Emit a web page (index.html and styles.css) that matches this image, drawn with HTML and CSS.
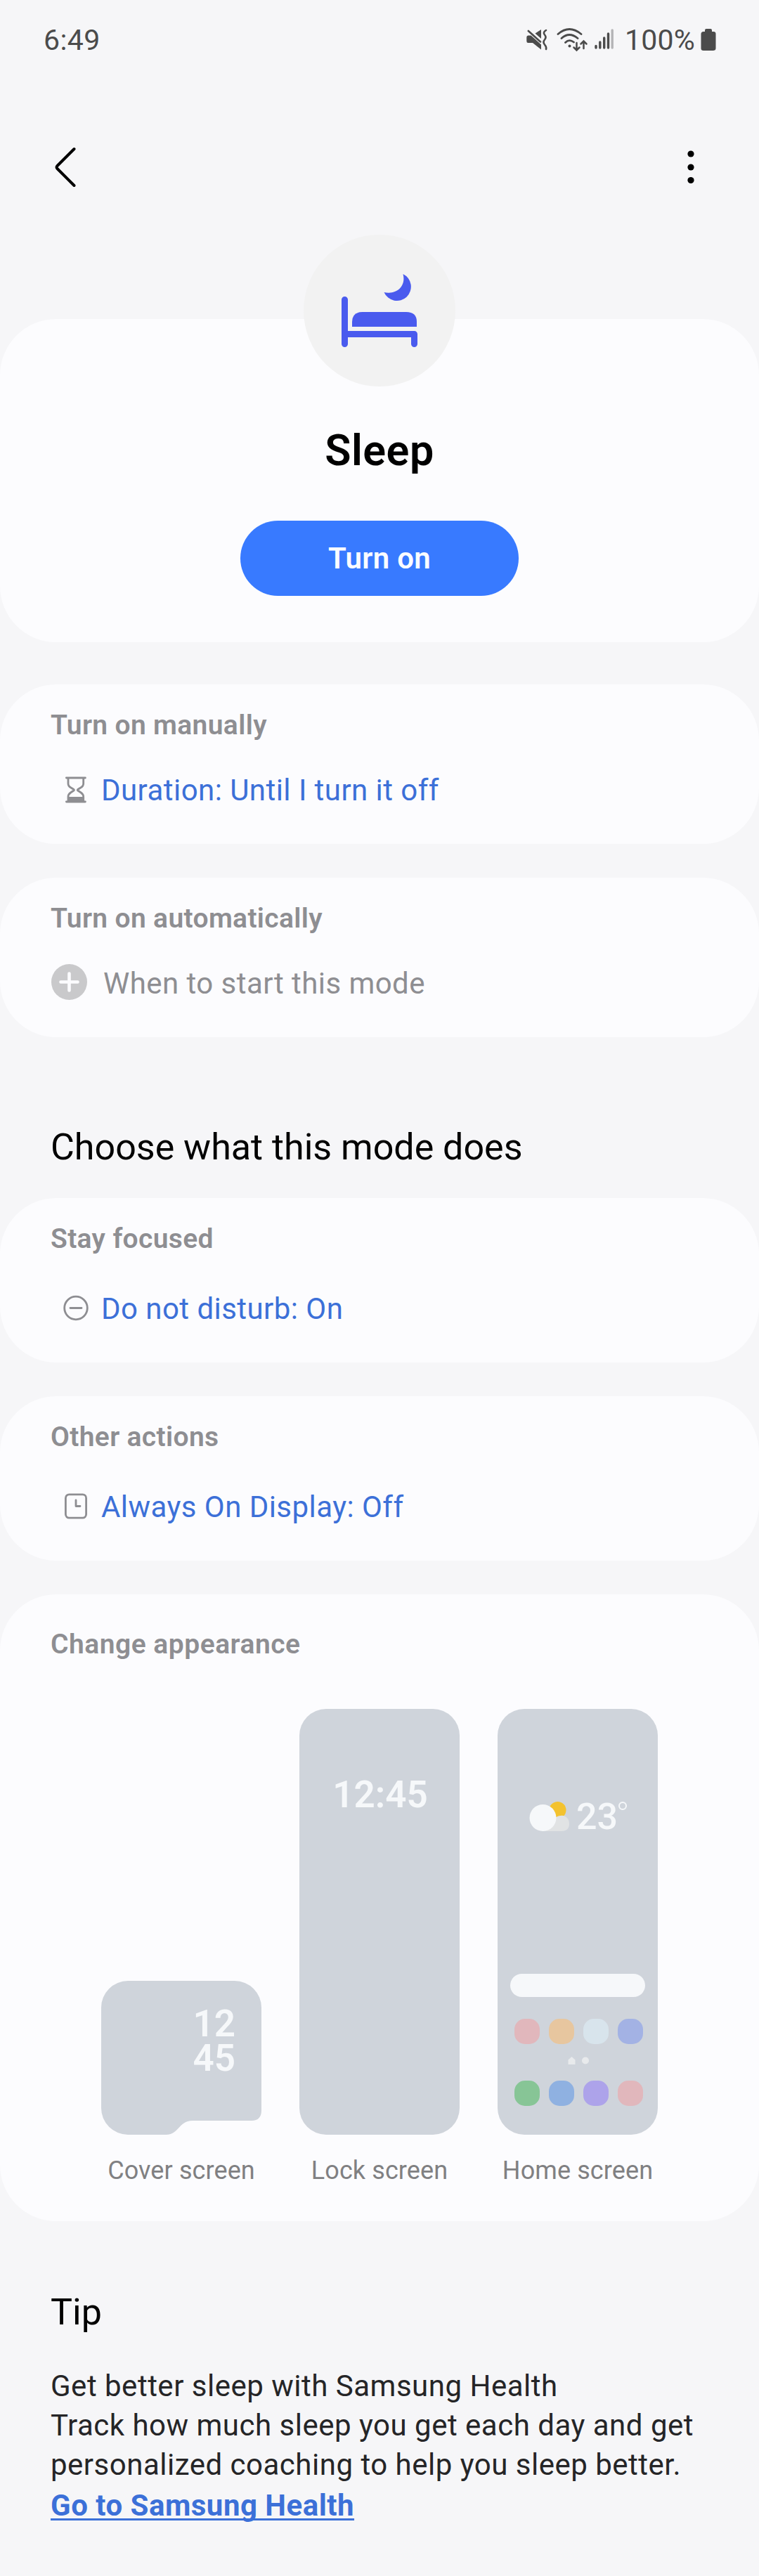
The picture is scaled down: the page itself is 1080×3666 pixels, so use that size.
FILE: index.html
```html
<!DOCTYPE html>
<html lang="en">
<head>
<meta charset="utf-8">
<title>Sleep mode</title>
<link rel="stylesheet" href="styles.css">
</head>
<body>
<header class="status">
  <span class="status-time">6:49</span>
  <svg class="status-mute" width="32" height="32" viewBox="0 0 32 32">
    <g fill="#4b4b4b">
      <path d="M2.500 9.500H6.500L21 22.500V29.500L9 20H2.500Q.3 20 .3 17.500V12Q.3 9.500 2.500 9.500Z"/>
      <path d="M12.500 6.500L21 1V14Z"/>
    </g>
    <path d="M2.800 3L20 18.500" stroke="#4b4b4b" stroke-width="2.600" stroke-linecap="round"/>
    <path d="M28 2Q23 5 26 8.500T26 15.500T26 22.500T28 29" stroke="#4b4b4b" stroke-width="2.600" stroke-linecap="round" fill="none"/>
  </svg>
  <svg class="status-wifi" width="45" height="36" viewBox="0 0 45 36" fill="none" stroke="#4b4b4b" stroke-width="2.800" stroke-linecap="round">
    <path d="M2 9.500Q18 -4.500 35 9.500M7 15.500Q18 5.500 30 15.500M12.500 21.500Q18 16 24.500 21"/>
    <circle cx="18.500" cy="26.500" r="2" fill="#4b4b4b" stroke="none"/>
    <path d="M28.500 22V32M24.500 28.500L28.500 32.500L32.500 28.500M38.500 30V20M34.500 23.500L38.500 19.500L42.500 23.500" stroke-width="2.500"/>
  </svg>
  <svg class="status-signal" width="28" height="30" viewBox="0 0 28 30" stroke="#4b4b4b" stroke-width="3.400" stroke-linecap="round">
    <path d="M2 24.500V27M7.800 19V27M13.700 13V27M19.500 7V27"/>
    <path d="M25.200 2V27" stroke="#b4b4b6"/>
  </svg>
  <span class="status-pct">100%</span>
  <svg width="22" height="32" viewBox="0 0 22 32" fill="#4b4b4b"><path d="M6 4V2Q6 0 8 0H14Q16 0 16 2V4H18Q21.500 4 21.500 7.500V28Q21.500 31 18 31H4Q.5 31 .5 28V7.500Q.5 4 4 4Z"/></svg>
</header>

<nav class="toolbar">
  <svg width="32" height="58" viewBox="0 0 32 58" fill="none" stroke="#000" stroke-width="4" stroke-linecap="round" stroke-linejoin="round"><path d="M28.500 3L4.500 27Q2.500 29 4.500 31L28.500 55"/></svg>
  <svg width="10" height="50" viewBox="0 0 10 50"><circle cx="5" cy="6" r="4.600"/><circle cx="5" cy="25" r="4.600"/><circle cx="5" cy="43.500" r="4.600"/></svg>
</nav>

<main>
  <section class="card hero">
    <div class="hero-icon">
      <svg width="108" height="105" viewBox="0 0 108 105" fill="#4a5bee">
        <path d="M87.500 0A20 20 0 1 1 60.500 26C79 30 92 17 87.500 0Z"/>
        <path d="M15 75V68Q15 54 30 54H92Q107 54 107 68V75Z"/>
        <path d="M4.500 36.500V99.500M4.500 85.500H103.500V99.500" fill="none" stroke="#4a5bee" stroke-width="9" stroke-linecap="round" stroke-linejoin="round"/>
      </svg>
    </div>
    <h1 class="hero-title">Sleep</h1>
    <button class="hero-button">Turn on</button>
  </section>

  <section class="card manual">
    <h2 class="label">Turn on manually</h2>
    <div class="row">
      <svg class="row-icon" width="34" height="38" viewBox="0 0 34 38" fill="none" stroke="#8e8e92" stroke-width="2.800" stroke-linecap="round">
        <path d="M3.400 2H30.400M3.400 36H30.400" />
        <path d="M6 3V10Q6 14 10 16L14 18.500Q15 19.300 14 20L9.500 23Q6 25.500 6 29V35M27.700 3V10Q27.700 14 23.700 16L19.700 18.500Q18.700 19.300 19.700 20L24.200 23Q27.700 25.500 27.700 29V35"/>
        <path d="M6 29H27.700V36H6Z" fill="#8e8e92" stroke="none"/>
      </svg>
      <span class="link">Duration: Until I turn it off</span>
    </div>
  </section>

  <section class="card">
    <h2 class="label">Turn on automatically</h2>
    <div class="row row-add">
      <svg class="add-icon" width="51" height="51" viewBox="0 0 51 51"><circle cx="25.500" cy="25.500" r="25.500" fill="#c9c9cb"/><path d="M25.500 13.500V37.500M13.500 25.500H37.500" stroke="#fcfcfe" stroke-width="4.600" stroke-linecap="round"/></svg>
      <span class="muted">When to start this mode</span>
    </div>
  </section>

  <h2 class="heading">Choose what this mode does</h2>

  <section class="card focus">
    <h2 class="label">Stay focused</h2>
    <div class="row">
      <svg class="row-icon" width="36" height="38" viewBox="0 0 36 38" fill="none" stroke="#8e8e92" stroke-width="2.800" stroke-linecap="round"><circle cx="18" cy="18.500" r="16.300"/><path d="M10 18.500H26"/></svg>
      <span class="link">Do not disturb: On</span>
    </div>
  </section>

  <section class="card actions">
    <h2 class="label">Other actions</h2>
    <div class="row">
      <svg class="row-icon" width="36" height="38" viewBox="0 0 36 38" fill="none" stroke="#8e8e92" stroke-width="2.800" stroke-linecap="round"><rect x="3.400" y="1.900" width="29.200" height="33.200" rx="5"/><path d="M18 10V18.500H24" stroke-linejoin="round"/></svg>
      <span class="link">Always On Display: Off</span>
    </div>
  </section>

  <section class="card appearance">
    <h2 class="label">Change appearance</h2>
    <div class="previews">
      <figure class="preview">
        <div class="cover">
          <svg class="cover-shape" width="228" height="219" viewBox="0 0 228 219"><path d="M38 0H190A38 38 0 0 1 228 38V184Q228 199 214 199H130C110 199 111 219 92 219H38A38 38 0 0 1 0 181V38A38 38 0 0 1 38 0Z" fill="#cfd4db"/></svg>
          <div class="cover-clock"><span>12</span><span>45</span></div>
        </div>
        <figcaption>Cover screen</figcaption>
      </figure>
      <figure class="preview">
        <div class="phone"><span class="lock-clock">12:45</span></div>
        <figcaption>Lock screen</figcaption>
      </figure>
      <figure class="preview">
        <div class="phone home">
          <div class="weather">
            <svg width="58" height="44" viewBox="0 0 58 44">
              <circle cx="40.500" cy="13" r="12" fill="#f3c22f"/>
              <path d="M20 43V30L38 23Q44 20 49 21Q57 24 57 32Q57 43 46 43Z" fill="#e1e3e4"/>
              <circle cx="19.500" cy="24" r="19" fill="#f6f8fa"/>
            </svg>
            <span class="temp">23</span>
            <span class="degree"></span>
          </div>
          <div class="search"></div>
          <div class="apps"><i class="red"></i><i class="orange"></i><i class="ice"></i><i class="indigo"></i></div>
          <svg class="pager" width="30" height="12" viewBox="0 0 30 12" fill="#e8eaec"><path d="M5.500 0L10.500 4.500V11H.5V4.500Z"/><circle cx="25" cy="5.500" r="5"/></svg>
          <div class="apps"><i class="green"></i><i class="blue"></i><i class="violet"></i><i class="red"></i></div>
        </div>
        <figcaption>Home screen</figcaption>
      </figure>
    </div>
  </section>

  <section class="tip">
    <h2 class="tip-title">Tip</h2>
    <p class="tip-text">Get better sleep with Samsung Health<br>Track how much sleep you get each day and get<br>personalized coaching to help you sleep better.</p>
    <a class="tip-link" href="#">Go to Samsung Health</a>
  </section>
</main>
</body>
</html>
```
FILE: styles.css
```css
* { box-sizing: border-box; }

body {
  margin: 0;
  width: 1080px;
  min-height: 3666px;
  background: #f6f6f8;
  color: #000;
  font-family: Roboto, "Liberation Sans", sans-serif;
}

svg { display: block; flex: none; }
h1, h2, p, figure { margin: 0; }

.status {
  display: flex;
  align-items: flex-start;
  height: 120px;
  padding: 41px 61px 0 62px;
  color: #4b4b4b;
  font-size: 41px;
}
.status-time { margin: -8px auto 0 0; line-height: 48px; letter-spacing: .4px; }
.status-mute { margin-right: 11px; }
.status-wifi { margin: -2px 9px 0 0; }
.status-signal { margin-right: 15px; }
.status-pct { width: 108px; margin-top: -8px; line-height: 48px; letter-spacing: .2px; }

.toolbar {
  display: flex;
  justify-content: space-between;
  align-items: center;
  height: 236px;
  padding: 0 92px 0 77px;
}

main { display: flex; flex-direction: column; gap: 48px; margin-top: 98px; }

.card {
  height: 227px;
  padding: 35px 72px 0;
  border-radius: 80px;
  background: #fcfcfe;
}

.hero {
  display: flex;
  flex-direction: column;
  align-items: center;
  height: 460px;
  padding: 0;
}
.hero-icon {
  display: flex;
  justify-content: center;
  width: 216px;
  height: 216px;
  margin-top: -120px;
  padding-top: 56px;
  border-radius: 50%;
  background: #f2f2f2;
}
.hero-title { margin-top: 56px; font-size: 61px; font-weight: 600; line-height: 70px; letter-spacing: .5px; }
.hero-button {
  width: 396px;
  height: 107px;
  margin-top: 65px;
  border: 0;
  border-radius: 54px;
  background: #387aff;
  color: #fafcff;
  font: 600 42px/50px Roboto, sans-serif;
  letter-spacing: .3px;
}

.manual { margin-top: 12px; }
.label { color: #8e8e92; font-size: 39px; font-weight: 600; line-height: 46px; letter-spacing: .35px; }
.row { display: flex; gap: 18px; height: 50px; margin-top: 45px; padding-left: 18px; font-size: 42px; line-height: 50px; letter-spacing: .45px; }
.row-icon { width: 36px; margin-top: 5px; }
.row-add { gap: 23px; padding-left: 1px; }
.add-icon { margin-top: -3px; }
.link { color: #3c70d8; }
.muted { color: #8e8e92; }

.heading { margin: 79px 72px -6px; font-size: 52px; font-weight: 400; line-height: 60px; }

.focus, .actions { height: 234px; }
.focus .row, .actions .row { margin-top: 52px; }

.appearance { height: 892px; padding-top: 48px; }
.appearance .label { letter-spacing: .5px; }
.previews { display: flex; align-items: flex-end; gap: 54px; margin: 69px 72px 0; }
.preview { width: 228px; }
.preview figcaption { margin-top: 30px; color: #808082; font-size: 36px; line-height: 42px; letter-spacing: .1px; text-align: center; white-space: nowrap; }

.cover { display: grid; height: 219px; }
.cover-shape, .cover-clock { grid-area: 1 / 1; }
.cover-clock {
  display: flex;
  flex-direction: column;
  align-items: flex-end;
  padding: 37px 37px 0 0;
  color: #f6f8fa;
  font-size: 53px;
  font-weight: 600;
  line-height: 49px;
}

.phone { height: 606px; border-radius: 38px; background: #cfd4db; color: #f6f8fa; }
.lock-clock { display: block; padding: 92px 0 0 2px; font-size: 53px; font-weight: 600; line-height: 60px; text-align: center; }
.home { display: flex; flex-direction: column; align-items: center; }
.weather { display: flex; width: 100%; height: 44px; margin-top: 131px; padding-left: 45px; }
.temp { margin: -5px 0 0 9px; font-size: 52px; font-weight: 500; line-height: 56px; }
.degree { width: 12px; height: 12px; margin: 1px 0 0 1px; border: 2.5px solid #f6f8fa; border-radius: 50%; }
.search { width: 192px; height: 33px; margin-top: 202px; border-radius: 17px; background: #f6f8fa; }
.apps { display: flex; gap: 13px; margin: 31px 0 18px 2px; }
.apps i { width: 36px; height: 36px; border-radius: 15px; }
.pager { margin: 0 0 -9px 2px; }
.red { background: #e1b7bc; }
.orange { background: #e7c69f; }
.ice { background: #d8e4ec; }
.indigo { background: #a3b2e4; }
.green { background: #87c596; }
.blue { background: #8fb1e1; }
.violet { background: #ada3ea; }

.tip { margin-top: 52px; padding: 0 72px; }
.tip-title { font-size: 52px; font-weight: 400; line-height: 60px; }
.tip-text { margin-top: 47px; color: #252527; font-size: 42px; line-height: 56px; letter-spacing: .5px; white-space: nowrap; }
.tip-link {
  display: inline-block;
  margin-top: 2px;
  color: #3c70d8;
  font-size: 42px;
  font-weight: 700;
  line-height: 56px;
  letter-spacing: .5px;
  text-decoration: underline;
  text-decoration-thickness: 3px;
  text-decoration-skip-ink: none;
  text-underline-offset: 4px;
}
```
